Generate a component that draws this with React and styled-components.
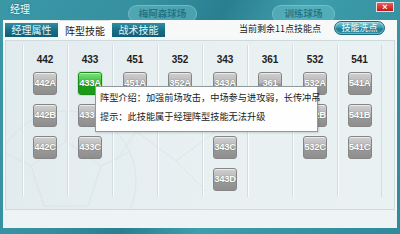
import React from "react";
import styled, { createGlobalStyle } from "styled-components";

const GlobalStyle = createGlobalStyle`
  html, body { margin: 0; padding: 0; background: #3d9cab; }
  * { box-sizing: border-box; }
`;

const CJK = `"Noto Sans CJK SC", "Noto Sans", sans-serif`;
const LAT = `"Liberation Sans", Arial, sans-serif`;

const Window = styled.div`
  position: relative;
  width: 400px;
  height: 234px;
  overflow: hidden;
  display: flex;
  flex-direction: column;
  background: linear-gradient(115deg, #3a98a7 0%, #358f9f 30%, #2a7f8f 45%, #3f9eab 60%, #3593a2 80%, #2f8a9a 100%);
  font-family: ${CJK};
`;

const TitleBar = styled.div`
  height: 20px;
  display: flex;
  align-items: flex-start;
  flex-shrink: 0;
`;

const Title = styled.div`
  margin-left: 10px;
  width: 22px;
  line-height: 18px;
  font-size: 10px;
  color: #f4fbfc;
  text-shadow: 0 0 2px rgba(0, 60, 70, 0.6);
`;

const Pill = styled.div`
  margin-top: 5px;
  margin-left: ${(p) => p.$ml}px;
  width: ${(p) => p.$w}px;
  height: 18px;
  border-radius: 9px;
  background: rgba(110, 195, 205, 0.45);
  border: 1px solid rgba(150, 215, 222, 0.45);
  color: rgba(25, 105, 120, 0.8);
  font-size: 9.5px;
  font-weight: bold;
  line-height: 15px;
  text-align: center;
`;

const Close = styled.div`
  margin-top: 2px;
  margin-left: ${(p) => p.$ml}px;
  width: 18px;
  height: 10px;
  border: 1px solid #f3dede;
  background: linear-gradient(#ee5a5a, #c01818);
  color: #fff;
  font-family: ${LAT};
  font-weight: bold;
  font-size: 9px;
  line-height: 8px;
  text-align: center;
`;

const Panel = styled.div`
  margin: 0 3px;
  height: 208px;
  background: #f5f8f8;
  display: flex;
  flex-direction: column;
  flex-shrink: 0;
`;

const TabRow = styled.div`
  height: 18px;
  display: flex;
  align-items: flex-start;
  padding-left: 2px;
  gap: 2px;
  background: #f7f9f9;
`;

const Tab = styled.div`
  width: ${(p) => (p.$active ? 50 : 53)}px;
  height: ${(p) => (p.$active ? 18 : 14)}px;
  margin-top: ${(p) => (p.$active ? 0 : 3)}px;
  font-size: 10px;
  line-height: ${(p) => (p.$active ? 20 : 14)}px;
  text-align: center;
  color: ${(p) => (p.$active ? "#1c1c1c" : "#e9f6f8")};
  background: ${(p) =>
    p.$active ? "#fbfcfc" : "linear-gradient(#2c8fa2, #176d84 55%, #0f5f76)"};
  border-top: ${(p) => (p.$active ? "1px solid #d8e2e3" : "none")};
`;

const Spacer = styled.div`
  flex: 1;
`;

const Info = styled.div`
  margin-top: 3px;
  margin-right: 11px;
  font-size: 9px;
  line-height: 12px;
  color: #222;
`;

const WashButton = styled.div`
  margin-top: 1px;
  margin-right: 12px;
  width: 51px;
  height: 14px;
  border-radius: 7px;
  border: 1px solid #1c6c7f;
  background: linear-gradient(#7ccad6, #3a9db1 45%, #1f7f95 55%, #2a8ea4);
  box-shadow: inset 0 0 0 1px rgba(255, 255, 255, 0.35);
  color: #f4fcfd;
  font-size: 9px;
  line-height: 12px;
  text-align: center;
`;

const Content = styled.div`
  position: relative;
  margin: 2px 2px 0 2px;
  height: 170px;
  border: 1px solid #cfdadc;
  background: linear-gradient(90deg, #e2ebee 0%, #e8f0f2 50%, #eaf1f3 100%);
  padding: 4px 0 0 16px;
  display: flex;
  overflow: hidden;
`;

const Pattern = styled.svg`
  position: absolute;
  left: 0;
  top: 30px;
  width: 230px;
  height: 140px;
  opacity: 0.5;
  pointer-events: none;
`;

const Column = styled.div`
  position: relative;
  width: 45px;
  height: 152px;
  border-left: 1px solid #d2dde0;
  box-shadow: inset 1px 0 0 #fbfdfd;
  display: flex;
  flex-direction: column;
  align-items: center;
  padding-top: 8px;
  &:last-child {
    border-right: 1px solid #d2dde0;
  }
`;

const Header = styled.div`
  height: 14px;
  margin-bottom: 5px;
  font-family: ${LAT};
  font-weight: bold;
  font-size: 10px;
  line-height: 14px;
  color: #1e1e1e;
`;

const SkillList = styled.div`
  display: flex;
  flex-direction: column;
  gap: 9px;
`;

const Skill = styled.div`
  width: 24px;
  height: 23px;
  border-radius: 3px;
  border: 1px solid ${(p) => (p.$on ? "#1a8a1a" : "#858585")};
  background: ${(p) =>
    p.$on
      ? "linear-gradient(#7fe07f, #3cc03c 45%, #16a016 55%, #1a9a1a)"
      : "linear-gradient(#cfcfcf, #b8b8b8 45%, #9a9a9a 55%, #8e8e8e)"};
  box-shadow: ${(p) =>
    p.$on ? "0 0 0 1px #b8f0b8, inset 0 1px 0 rgba(255,255,255,0.5)" : "inset 0 1px 0 rgba(255,255,255,0.6)"};
  font-family: ${LAT};
  font-weight: bold;
  font-size: 9.5px;
  line-height: 20px;
  text-align: center;
  color: #fff;
  text-shadow: 0 0 1px rgba(50, 50, 50, 0.7);
  letter-spacing: -0.3px;
  white-space: nowrap;
  overflow: hidden;
`;

const Footer = styled.div`
  flex: 1;
  background: #eef4f5;
`;

const Tooltip = styled.div`
  position: absolute;
  left: 95px;
  top: 86px;
  width: 223px;
  height: 46px;
  background: #fefefe;
  border: 1px solid #8e9a9c;
  box-shadow: 1px 1px 2px rgba(0, 0, 0, 0.15);
  padding: 4px 0 0 4px;
  font-size: 9.2px;
  color: #1a1a1a;
  white-space: nowrap;
  display: flex;
  flex-direction: column;
  gap: 6px;
`;

const TipLine = styled.div`
  line-height: 13px;
`;

const columns = [
  { h: "442", b: ["442A", "442B", "442C"] },
  { h: "433", b: ["433A", "433B", "433C"] },
  { h: "451", b: ["451A"] },
  { h: "352", b: ["352A"] },
  { h: "343", b: ["343A", "343B", "343C", "343D"] },
  { h: "361", b: ["361"] },
  { h: "532", b: ["532A", "532B", "532C"] },
  { h: "541", b: ["541A", "541B", "541C"] },
];

export default function App() {
  return (
    <>
      <GlobalStyle />
      <Window>
        <TitleBar>
          <Title>经理</Title>
          <Pill $ml={96} $w={69}>梅阿森球场</Pill>
          <Pill $ml={75} $w={63}>训练球场</Pill>
          <Close $ml={41}>×</Close>
        </TitleBar>
        <Panel>
          <TabRow>
            <Tab>经理属性</Tab>
            <Tab $active>阵型技能</Tab>
            <Tab>战术技能</Tab>
            <Spacer />
            <Info>当前剩余11点技能点</Info>
            <WashButton>技能洗点</WashButton>
          </TabRow>
          <Content>
            <Pattern viewBox="0 0 230 140">
              <g fill="none" stroke="#d3dfe2" strokeWidth="1">
                <circle cx="60" cy="110" r="70" />
                <polygon points="60,70 95,95 82,135 38,135 25,95" />
                <line x1="60" y1="70" x2="60" y2="40" />
                <line x1="95" y1="95" x2="125" y2="80" />
                <line x1="25" y1="95" x2="-5" y2="80" />
                <path d="M130 60 L170 90 L210 60 L170 30 Z" />
                <path d="M170 90 L200 120 M130 60 L110 90" />
              </g>
            </Pattern>
            {columns.map((c) => (
              <Column key={c.h}>
                <Header>{c.h}</Header>
                <SkillList>
                  {c.b.map((s) => (
                    <Skill key={s} $on={s === "433A"}>
                      {s}
                    </Skill>
                  ))}
                </SkillList>
              </Column>
            ))}
          </Content>
          <Footer />
        </Panel>
        <Tooltip>
          <TipLine>阵型介绍：加强前场攻击，中场参与进攻弱，长传冲吊</TipLine>
          <TipLine>提示：此技能属于经理阵型技能无法升级</TipLine>
        </Tooltip>
      </Window>
    </>
  );
}
